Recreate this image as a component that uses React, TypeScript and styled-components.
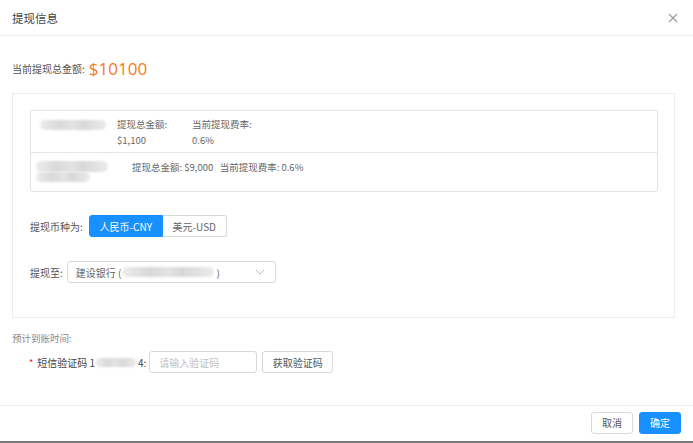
import styled, { createGlobalStyle } from 'styled-components';

const GlobalStyle = createGlobalStyle`
  html, body {
    margin: 0;
    padding: 0;
    background: #fff;
  }
  body {
    font-family: 'Noto Sans CJK SC', 'Noto Sans', 'Liberation Sans', sans-serif;
    color: #595959;
  }
  * { box-sizing: border-box; }
`;

const records = [
  { id: 1, total: '$1,100', rate: '0.6%' },
  { id: 2, total: '$9,000', rate: '0.6%' },
];

const App = () => {
  return (
    <>
      <GlobalStyle />
      <Modal>
        <Header>
          <Title>提现信息</Title>
          <Close aria-label='close'>
            <svg width='10' height='10' viewBox='0 0 10 10'>
              <path d='M1 1 L9 9 M9 1 L1 9' stroke='#9a9a9a' strokeWidth='1.1' fill='none' />
            </svg>
          </Close>
        </Header>

        <Body>
          <Summary>
            当前提现总金额:<Amount>$10100</Amount>
          </Summary>

          <Card>
            <Table>
              <Row $height={41}>
                <Blur $w={66} $h={10} $left={9} />
                <StackCol>
                  <span>提现总金额:</span>
                  <span>{records[0].total}</span>
                </StackCol>
                <StackCol>
                  <span>当前提现费率:</span>
                  <span>{records[0].rate}</span>
                </StackCol>
              </Row>
              <Row $height={39} $divider>
                <BlurStack>
                  <Blur $w={72} $h={11} $left={5} />
                  <Blur $w={54} $h={10} $left={5} />
                </BlurStack>
                <Inline>
                  提现总金额: {records[1].total}&nbsp;&nbsp;&nbsp;当前提现费率: {records[1].rate}
                </Inline>
              </Row>
            </Table>

            <Field $top={23}>
              <Label>提现币种为:</Label>
              <Segmented>
                <Segment $active>人民币-CNY</Segment>
                <Segment>美元-USD</Segment>
              </Segmented>
            </Field>

            <Field $top={24}>
              <Label>提现至:</Label>
              <Select>
                <span>建设银行 (</span>
                <Blur $w={92} $h={10} $left={1} />
                <span>)</span>
                <Chevron width='10' height='6' viewBox='0 0 10 6'>
                  <path d='M1 1 L5 5 L9 1' stroke='#bfbfbf' strokeWidth='1' fill='none' />
                </Chevron>
              </Select>
            </Field>
          </Card>

          <Hint>预计到账时间:</Hint>

          <VerifyRow>
            <VerifyLabel>
              <Star>*</Star>短信验证码 1<Blur $w={40} $h={9} $left={1} />4:
            </VerifyLabel>
            <Input placeholder='请输入验证码' />
            <GhostButton>获取验证码</GhostButton>
          </VerifyRow>
        </Body>

        <Footer>
          <GhostButton $narrow>取消</GhostButton>
          <PrimaryButton>确定</PrimaryButton>
        </Footer>
      </Modal>
    </>
  );
};

export default App;

const Modal = styled.div`
  width: 693px;
  height: 443px;
  display: flex;
  flex-direction: column;
  background: #fff;
  border-bottom: 2px solid #7a7a7a;
`;

const Header = styled.div`
  height: 36px;
  flex-shrink: 0;
  display: flex;
  align-items: center;
  justify-content: space-between;
  padding: 0 15px 0 12px;
  border-bottom: 1px solid #ececec;
`;

const Title = styled.div`
  font-size: 11.5px;
  color: #444;
`;

const Close = styled.span`
  display: flex;
  align-items: center;
`;

const Body = styled.div`
  flex: 1;
  padding: 20px 18px 0 12px;
  display: flex;
  flex-direction: column;
`;

const Summary = styled.div`
  height: 24px;
  display: flex;
  align-items: center;
  font-size: 10px;
  color: #555;
`;

const Amount = styled.span`
  font-size: 17px;
  color: #f47a22;
  margin-left: 4px;
  font-family: 'Open Sans', 'Noto Sans', sans-serif;
`;

const Card = styled.div`
  margin-top: 13px;
  border: 1px solid #ececec;
  padding: 16px 16px 34px 17px;
`;

const Table = styled.div`
  border: 1px solid #e2e2e2;
  border-radius: 3px;
`;

const Row = styled.div<{ $height: number; $divider?: boolean }>`
  height: ${(p) => p.$height}px;
  display: flex;
  align-items: flex-start;
  border-top: ${(p) => (p.$divider ? '1px solid #e6e6e6' : 'none')};
  font-size: 9.5px;
  color: #666;
`;

const StackCol = styled.div`
  display: flex;
  flex-direction: column;
  gap: 1px;
  padding-top: 6px;
  width: 75px;
  line-height: 15px;
  &:nth-of-type(1) {
    margin-left: 9px;
  }
`;

const BlurStack = styled.div`
  display: flex;
  flex-direction: column;
  padding-top: 8px;
  width: 100px;
`;

const Blur = styled.span<{ $w: number; $h: number; $left: number }>`
  display: inline-block;
  flex-shrink: 0;
  width: ${(p) => p.$w}px;
  height: ${(p) => p.$h}px;
  margin: 0 2px 0 ${(p) => p.$left}px;
  background: linear-gradient(90deg, #ececec, #d9d9d9 30%, #e4e4e4 50%, #d8d8d8 65%, #ebebeb);
  border-radius: 5px;
  filter: blur(1px);
  ${Row} > & {
    margin-top: 9px;
  }
`;

const Inline = styled.div`
  padding-top: 7px;
  margin-left: 1px;
  line-height: 14px;
`;

const Field = styled.div<{ $top: number }>`
  margin-top: ${(p) => p.$top}px;
  display: flex;
  align-items: center;
`;

const Label = styled.span`
  font-size: 10px;
  color: #555;
  margin-right: 4px;
`;

const Segmented = styled.div`
  display: flex;
  height: 22px;
  margin-left: 2px;
`;

const Segment = styled.span<{ $active?: boolean }>`
  display: flex;
  align-items: center;
  justify-content: center;
  white-space: nowrap;
  padding: 0;
  font-size: 10px;
  border: 1px solid ${(p) => (p.$active ? '#1890ff' : '#d9d9d9')};
  background: ${(p) => (p.$active ? '#1890ff' : '#fff')};
  color: ${(p) => (p.$active ? '#fff' : '#666')};
  &:first-child {
    border-radius: 3px 0 0 3px;
    width: 74px;
  }
  &:last-child {
    border-radius: 0 3px 3px 0;
    border-left: none;
    width: 64px;
  }
`;

const Select = styled.div`
  width: 209px;
  height: 22px;
  border: 1px solid #d9d9d9;
  border-radius: 3px;
  display: flex;
  align-items: center;
  padding: 0 8px;
  font-size: 10px;
  color: #666;
  white-space: nowrap;
`;

const Chevron = styled.svg`
  margin-left: auto;
  margin-right: 2px;
`;

const Hint = styled.div`
  margin-top: 13px;
  font-size: 9.5px;
  color: #888;
`;

const VerifyRow = styled.div`
  margin-top: 6px;
  display: flex;
  align-items: center;
  gap: 5px;
`;

const VerifyLabel = styled.span`
  display: flex;
  align-items: center;
  white-space: nowrap;
  padding-left: 17px;
  font-size: 10px;
  color: #444;
  margin-right: -2px;
`;

const Star = styled.span`
  color: #f5222d;
  margin-right: 4px;
  font-size: 9px;
`;

const Input = styled.input`
  width: 108px;
  height: 22px;
  border: 1px solid #d9d9d9;
  border-radius: 3px;
  padding: 0 9px;
  font-size: 10px;
  font-family: inherit;
  outline: none;
  &::placeholder {
    color: #bfbfbf;
  }
`;

const GhostButton = styled.button<{ $narrow?: boolean }>`
  height: 22px;
  width: ${(p) => (p.$narrow ? '42px' : '71px')};
  border: 1px solid #d9d9d9;
  border-radius: 3px;
  background: #fff;
  color: #555;
  font-size: 10px;
  font-family: inherit;
  padding: 0;
`;

const PrimaryButton = styled.button`
  height: 22px;
  width: 42px;
  border: 1px solid #1890ff;
  border-radius: 3px;
  background: #1890ff;
  color: #fff;
  font-size: 10px;
  font-family: inherit;
  padding: 0;
`;

const Footer = styled.div`
  flex-shrink: 0;
  height: 36px;
  border-top: 1px solid #ececec;
  display: flex;
  align-items: center;
  justify-content: flex-end;
  gap: 6px;
  padding: 0 12px 2px 0;
`;
